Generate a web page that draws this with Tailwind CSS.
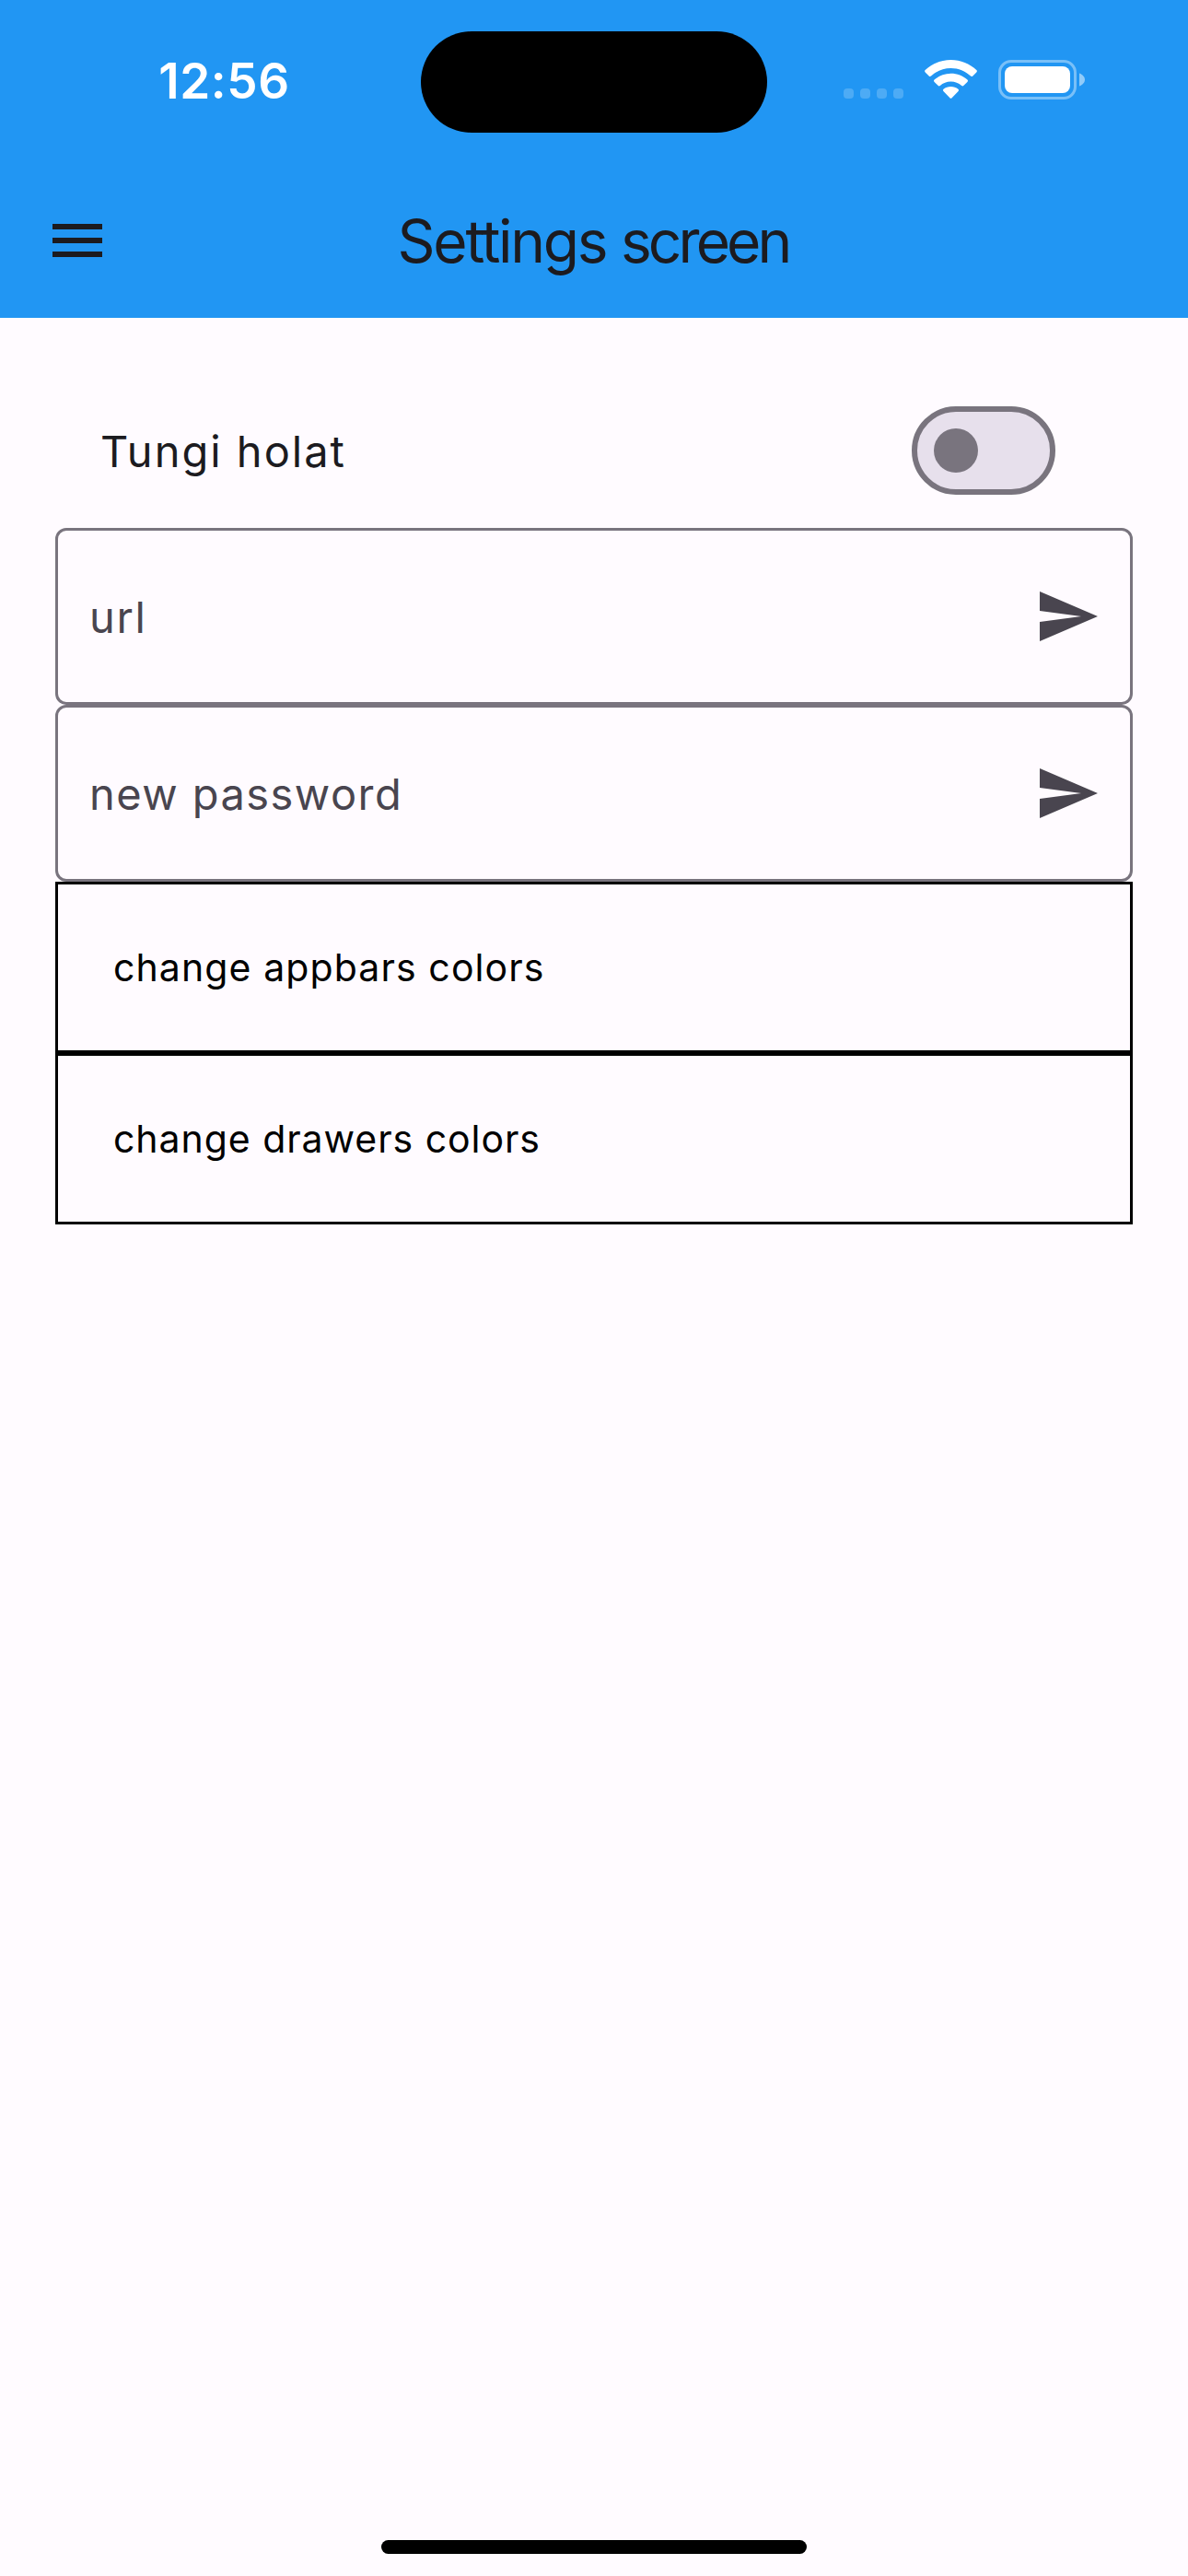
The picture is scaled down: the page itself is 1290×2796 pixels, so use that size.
<!DOCTYPE html>
<html lang="en">
<head>
<meta charset="utf-8">
<title>Settings screen</title>
<script src="https://cdn.jsdelivr.net/npm/@tailwindcss/browser@4"></script>
</head>
<body class="bg-[#fffbff]">
<div class="flex h-[2796px] w-[1290px] flex-col overflow-hidden bg-[#fffbff] font-['Inter',sans-serif] text-[#1c1b1f]">
  <header class="h-[345px] shrink-0 bg-[#2196f3]">
    <!-- Status bar -->
    <div class="grid h-[177px] grid-cols-[457px_376px_1fr] items-start text-white">
      <div class="flex h-[177px] items-center justify-center pl-[30px]">
        <span class="text-[53px] leading-none font-semibold tracking-[0.6px]">12:56</span>
      </div>
      <div class="mt-[34px] h-[110px] rounded-full bg-black"></div>
      <div class="flex items-start pt-[65px] pl-[83px]">
        <div class="mt-[31px] flex gap-[7px]">
          <span class="size-[11px] rounded-[4px] bg-white/20"></span>
          <span class="size-[11px] rounded-[4px] bg-white/20"></span>
          <span class="size-[11px] rounded-[4px] bg-white/20"></span>
          <span class="size-[11px] rounded-[4px] bg-white/20"></span>
        </div>
        <svg class="ml-[23px] h-[43px] w-[57px]" viewBox="0 0 57 43" fill="currentColor">
          <path d="M28.5 9C36.8 9 44.3 12.2 50 17.6Q51.2 18.6 52.3 17.5L56.3 13.4Q57.5 12.2 56.3 11.1C49 4.1 39.2 0 28.5 0S8 4.1.7 11.1Q-.5 12.2.7 13.4L4.7 17.5Q5.8 18.6 7 17.6C12.7 12.2 20.2 9 28.5 9z"/>
          <path d="M28.5 23.5C32.9 23.5 37 25.1 40.2 27.9Q41.4 28.9 42.5 27.8L46.4 23.9Q47.6 22.7 46.4 21.6C41.7 17.3 35.4 14.7 28.5 14.7S15.3 17.3 10.6 21.6Q9.4 22.7 10.6 23.9L14.5 27.8Q15.6 28.9 16.8 27.9C20 25.1 24.1 23.5 28.5 23.5z"/>
          <path d="M36.6 33.9Q37.7 32.8 36.5 31.8C34.3 30 31.5 29 28.5 29S22.7 30 20.5 31.8Q19.3 32.8 20.4 33.9L27.4 41.3Q28.5 42.4 29.6 41.3z"/>
        </svg>
        <svg class="ml-[23px] h-[43px] w-[94px]" viewBox="0 0 94 43" fill="none">
          <rect x="1.5" y="1.5" width="82" height="40" rx="12.5" stroke="currentColor" stroke-opacity=".4" stroke-width="3"/>
          <rect x="7" y="7" width="71" height="29" rx="8" fill="currentColor"/>
          <path d="M88 14.5C91.5 16 94 18.5 94 21.5S91.5 27 88 28.5z" fill="currentColor" fill-opacity=".5"/>
        </svg>
      </div>
    </div>
    <!-- App bar -->
    <div class="grid h-[168px] grid-cols-[168px_1fr_168px] items-center">
      <svg class="ml-12 size-[72px]" viewBox="0 0 24 24" fill="currentColor"><path d="M3 18h18v-2H3v2zm0-5h18v-2H3v2zm0-7v2h18V6H3z"/></svg>
      <h1 class="pt-[2px] pr-[2px] text-center text-[64px] leading-none tracking-[-2.3px]">Settings <span class="tracking-[-3.9px]">screen</span></h1>
    </div>
  </header>

  <main class="flex grow flex-col px-[60px] pt-[84px]">
    <div class="flex h-[144px] items-center justify-between pr-[84px] pb-[24px] pl-[49px]">
      <span class="text-[47px] leading-none tracking-[2px]">Tungi holat</span>
      <div class="flex h-[96px] w-[156px] items-center rounded-full border-[6px] border-[#79747e] bg-[#e7e0ec] pl-[18px]">
        <div class="size-[48px] rounded-full bg-[#79747e]"></div>
      </div>
    </div>
    <div class="flex h-[192px] items-center justify-between rounded-[12px] border-[3px] border-[#79747e] pr-[32px] pl-[34px] text-[#49454f]">
      <span class="text-[47px] leading-none tracking-[1.6px]">url</span>
      <svg class="size-[72px]" viewBox="0 0 24 24" fill="currentColor"><path d="M2.01 21L23 12 2.01 3 2 10l15 2-15 2z"/></svg>
    </div>
    <div class="flex h-[192px] items-center justify-between rounded-[12px] border-[3px] border-[#79747e] pr-[32px] pl-[34px] text-[#49454f]">
      <span class="text-[47px] leading-none tracking-[1.45px]">new password</span>
      <svg class="size-[72px]" viewBox="0 0 24 24" fill="currentColor"><path d="M2.01 21L23 12 2.01 3 2 10l15 2-15 2z"/></svg>
    </div>
    <div class="flex h-[186px] items-center border-[3px] border-black pl-[60px] text-[41px] leading-none tracking-[1.1px] text-black">change appbars colors</div>
    <div class="flex h-[186px] items-center border-[3px] border-black pl-[60px] text-[41px] leading-none tracking-[0.95px] text-black">change drawers colors</div>
  </main>

  <footer class="flex justify-center pb-[24px]">
    <div class="h-[15px] w-[462px] rounded-full bg-black"></div>
  </footer>
</div>
</body>
</html>
